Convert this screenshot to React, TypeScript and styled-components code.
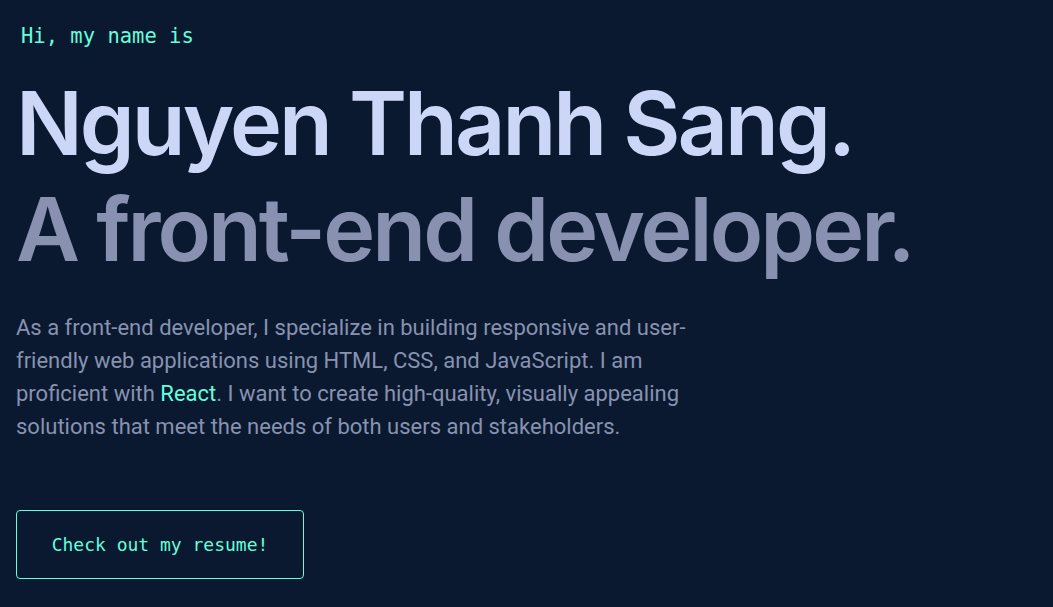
import React from "react";
import styled, { createGlobalStyle } from "styled-components";

const Global = createGlobalStyle`
  html, body { margin: 0; padding: 0; background: #0a192f; }
  body { font-family: "Inter", "Roboto", sans-serif; }
`;

const Hero = styled.section`
  display: flex;
  flex-direction: column;
  align-items: flex-start;
  padding: 24px 16px 0 16px;
  min-height: 607px;
  box-sizing: border-box;
  background: #0a192f;
`;

const Greeting = styled.h1`
  margin: 0 0 22px 5px;
  font-family: "DejaVu Sans Mono", "Liberation Mono", monospace;
  font-weight: 400;
  font-size: 20.5px;
  line-height: 24px;
  color: #64ffda;
`;

const BigTitle = styled.h2<{ $muted?: boolean }>`
  margin: 0;
  font-family: "Inter", sans-serif;
  font-weight: 600;
  font-size: 88px;
  line-height: 106px;
  letter-spacing: -3px;
  color: ${(p) => (p.$muted ? "#8892b0" : "#ccd6f6")};
`;

const Intro = styled.p`
  margin: 29px 0 0 0;
  max-width: 692px;
  font-family: "Roboto", sans-serif;
  font-size: 22px;
  line-height: 33px;
  color: #8892b0;
`;

const Accent = styled.span`
  color: #64ffda;
`;

const ResumeButton = styled.a`
  margin-top: 67px;
  display: flex;
  align-items: center;
  justify-content: center;
  width: 288px;
  height: 69px;
  box-sizing: border-box;
  border: 1px solid #64ffda;
  border-radius: 4px;
  font-family: "DejaVu Sans Mono", "Liberation Mono", monospace;
  font-size: 18px;
  color: #64ffda;
  text-decoration: none;
`;

export default function App() {
  return (
    <>
      <Global />
      <Hero>
        <Greeting>Hi, my name is</Greeting>
        <BigTitle>Nguyen Thanh Sang.</BigTitle>
        <BigTitle $muted>A front-end developer.</BigTitle>
        <Intro>
          As a front-end developer, I specialize in building responsive and user-friendly web
          applications using HTML, CSS, and JavaScript. I am proficient with <Accent>React</Accent>.
          I want to create high-quality, visually appealing solutions that meet the needs of both
          users and stakeholders.
        </Intro>
        <ResumeButton href="#">Check out my resume!</ResumeButton>
      </Hero>
    </>
  );
}
